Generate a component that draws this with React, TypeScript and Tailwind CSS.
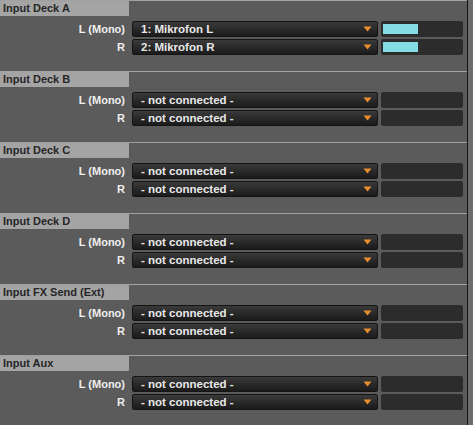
const sections = [
  { title: "Input Deck A", left: "1: Mikrofon L", right: "2: Mikrofon R", level: true },
  { title: "Input Deck B" },
  { title: "Input Deck C" },
  { title: "Input Deck D" },
  { title: "Input FX Send (Ext)" },
  { title: "Input Aux" },
];

function Arrow() {
  return (
    <svg width="9" height="6" viewBox="0 0 9 6" className="shrink-0">
      <path d="M0.5 0.5 H8.5 L4.5 5.5 Z" fill="#e98f2e" />
    </svg>
  );
}

function ChannelRow({ label, value, level }: { label: string; value: string; level?: boolean }) {
  return (
    <div className="flex h-4 items-center">
      <div className="w-[126px] pr-px text-right text-[#efefef]">{label}</div>
      <div className="ml-[6px] flex h-4 w-[246px] items-center justify-between rounded-[2px] border border-[#141414] bg-gradient-to-b from-[#3a3a3a] to-[#1b1b1b] pl-2 pr-[5px] text-[11.5px] text-[#e8e8e8]">
        <span className="pt-px leading-none">{value}</span>
        <Arrow />
      </div>
      <div className="ml-[3px] flex h-4 w-[82px] items-center rounded-[2px] bg-[#2c2c2c] px-[2px]">
        {level && <div className="h-[10px] w-[35px] bg-[#86dce5]" />}
      </div>
    </div>
  );
}

function Section({ title, left, right, level }: { title: string; left?: string; right?: string; level?: boolean }) {
  return (
    <div className="h-[71px] border-t border-[#a0a0a0]">
      <div className="flex h-[15px] w-[129px] items-center bg-[#a4a4a4] pl-[3px] text-[#262626]">{title}</div>
      <div className="mt-[5px] flex flex-col gap-[2px]">
        <ChannelRow label="L (Mono)" value={left ?? "- not connected -"} level={level} />
        <ChannelRow label="R" value={right ?? "- not connected -"} level={level} />
      </div>
    </div>
  );
}

export default function App() {
  return (
    <div
      className="flex h-[425px] w-[473px] overflow-hidden bg-[#5b5b5b] text-[11px] font-bold"
      style={{ fontFamily: '"Liberation Sans", Arial, sans-serif' }}
    >
      <div className="w-[467px]">
        {sections.map((s) => (
          <Section key={s.title} {...s} />
        ))}
      </div>
      <div className="w-px bg-[#151515]" />
      <div className="flex-1 bg-[#6c6c6c]" />
    </div>
  );
}
